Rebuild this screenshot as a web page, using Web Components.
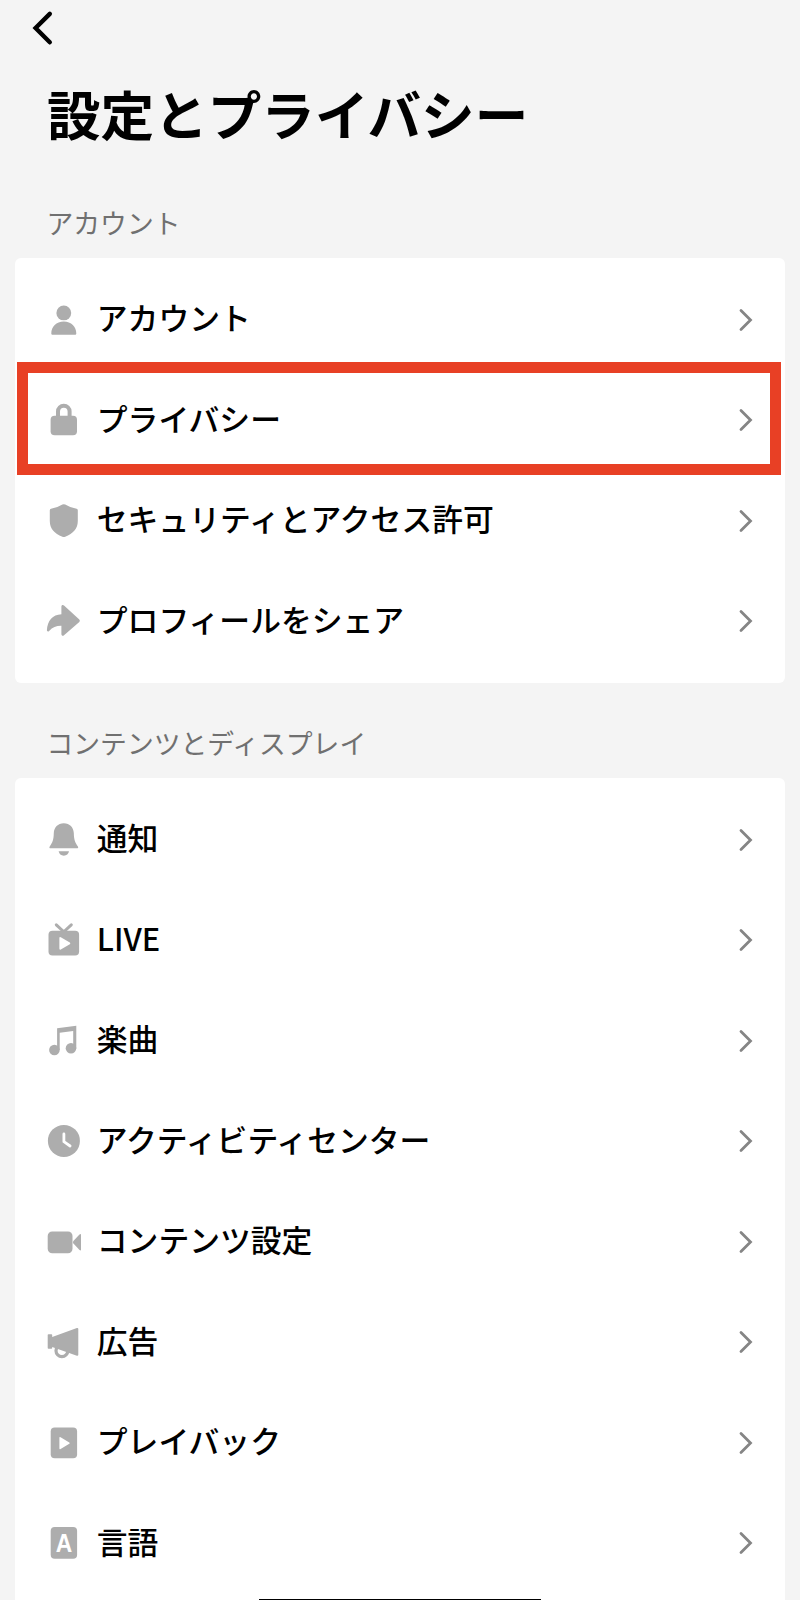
<!DOCTYPE html>
<html lang="ja">
<head>
<meta charset="utf-8">
<title>設定とプライバシー</title>
<style>
  body {
    margin: 0;
    height: 1600px;
    overflow: hidden;
    background: #f4f4f4;
    color: #000;
    font-family: "Noto Sans CJK JP", sans-serif;
  }
</style>
</head>
<body>
<settings-page heading="設定とプライバシー">
  <settings-group label="アカウント">
    <settings-row icon="person">アカウント</settings-row>
    <settings-row icon="lock" highlighted>プライバシー</settings-row>
    <settings-row icon="shield">セキュリティとアクセス許可</settings-row>
    <settings-row icon="share">プロフィールをシェア</settings-row>
  </settings-group>
  <settings-group label="コンテンツとディスプレイ">
    <settings-row icon="bell">通知</settings-row>
    <settings-row icon="live">LIVE</settings-row>
    <settings-row icon="music">楽曲</settings-row>
    <settings-row icon="clock">アクティビティセンター</settings-row>
    <settings-row icon="video">コンテンツ設定</settings-row>
    <settings-row icon="horn">広告</settings-row>
    <settings-row icon="playback">プレイバック</settings-row>
    <settings-row icon="language">言語</settings-row>
  </settings-group>
</settings-page>

<script>
const icons = {
  person: `
    <circle cx="17.8" cy="10.9" r="7.4"/>
    <path d="M5.3 31.500c0-7 5-12 12.500-12s12.500 5 12.500 12c0 .8-.6 1.300-1.400 1.300H6.700c-.8 0-1.400-.5-1.400-1.300z"/>`,
  lock: `
    <path d="M12 16V9.600a5.800 5.800 0 0 1 11.600 0V16" fill="none" stroke="currentColor" stroke-width="4"/>
    <rect x="4.600" y="13.700" width="26.400" height="19.600" rx="4"/>`,
  shield: `
    <path d="M16.4 1.6q1.4-.8 2.8 0Q24.5 5 30.6 5.7q1.2.2 1.2 1.5V18c0 7.600-4.500 12.500-12.600 15.800q-1.400.5-2.800 0C8.300 30.500 3.800 25.600 3.800 18V7.200q0-1.300 1.200-1.500Q11.100 5 16.400 1.600z"/>`,
  share: `
    <path d="M15.400 3.600c0-1.500 1.500-2 2.600-1l15.300 14q1.200 1.200 0 2.500L18 32.200c-1.100 1-2.600.4-2.600-1v-8.400c-5-.1-8.800 1.600-12.300 5.100-1 1-2.300.5-2.200-.9C1.500 17.500 6.500 11.700 15.400 11.200z"/>`,
  bell: `
    <path d="M17.800 1.300c6 0 9.800 4.300 10 9.800.2 6.900 1.200 9.400 4.100 13.300.7 1 .2 1.900-.8 1.900H4.500c-1 0-1.500-.9-.8-1.900 2.900-3.900 3.900-6.400 4.100-13.300.2-5.500 4-9.800 10-9.800z"/>
    <path d="M12.600 29.300H23c-.5 2.600-2.400 4.400-5.200 4.400s-4.700-1.800-5.200-4.400z"/>`,
  live: `
    <path d="M10.300 2.800l7.500 7 7.500-7" fill="none" stroke="currentColor" stroke-width="3" stroke-linecap="round"/>
    <rect x="2.500" y="8.800" width="30.600" height="24.600" rx="4"/>
    <path d="M13.400 16v10.600q0 1.600 1.400.8l9-5.200q1.200-.9 0-1.700l-9-5.300q-1.400-.8-1.400.8z" fill="#fff"/>`,
  music: `
    <circle cx="8.400" cy="27" r="5.300"/>
    <circle cx="25" cy="25.200" r="5.300"/>
    <path d="M11.100 5.200L30.300 2.700V25.200H27.200V8L13.700 9.800V27H11.100z"/>`,
  clock: `
    <circle cx="17.900" cy="17.900" r="16"/>
    <path d="M17.900 11V18.700l6.200 4.300" fill="none" stroke="#fff" stroke-width="2.800" stroke-linecap="round" stroke-linejoin="round"/>`,
  video: `
    <rect x="1.700" y="7.500" width="24.800" height="21.700" rx="4.500"/>
    <path d="M27.400 17.100l6.100-6.500q1.500-1.200 1.500.5v14.500q0 1.700-1.500.5l-6.100-6.500q-1-1.200 0-2.500z"/>`,
  horn: `
    <circle cx="15.900" cy="26.700" r="5.900" fill="#fff" stroke="currentColor" stroke-width="3.200"/>
    <path d="M2.500 10.300h2.900q.8 0 .8.800v1.900L30.900 4q1.400-.3 1.400 1v25.700q0 1.400-1.400 1.100L6.200 23v.9q0 .8-.8.800H2.500q-.8 0-.8-.8V11.100q0-.8.800-.8z"/>`,
  playback: `
    <rect x="4.700" y="2.400" width="26.400" height="30.800" rx="4"/>
    <path d="M13.400 12.800v10.400q0 1.400 1.200.7l8.700-5.200q1-.7 0-1.300l-8.700-5.200q-1.200-.7-1.200.6z" fill="#fff"/>`,
  language: `
    <rect x="4.700" y="1.900" width="26.400" height="31.800" rx="4"/>
    <text x="17.900" y="26.800" text-anchor="middle" fill="#fff" font-family="Liberation Sans, sans-serif" font-size="25" font-weight="700" textLength="16.500" lengthAdjust="spacingAndGlyphs">A</text>`,
};

const pageTemplate = document.createElement("template");
pageTemplate.innerHTML = `
  <style>
    :host {
      display: block;
      position: relative;
      height: 1600px;
      overflow: hidden;
    }
    header {
      box-sizing: border-box;
      height: 188px;
    }
    .back {
      display: block;
      width: 24px;
      height: 36px;
      padding: 10px 0 0 30px;
    }
    h1 {
      margin: 28px 0 0 47px;
      font-size: 53.600px;
      line-height: 78px;
      font-weight: 700;
      white-space: nowrap;
    }
    /* home indicator, only its top edge is on screen */
    .indicator {
      position: absolute;
      left: 259px;
      top: 1599px;
      width: 282px;
      height: 9px;
      background: #000;
    }
  </style>
  <header>
    <svg class="back" viewBox="0 0 24 36" fill="none" stroke="#000" stroke-width="4.400">
      <path d="M19.800 3.900L5.600 18l14.200 14.300" stroke-linecap="round"/>
    </svg>
    <h1></h1>
  </header>
  <slot></slot>
  <div class="indicator"></div>
`;

class SettingsPage extends HTMLElement {
  constructor() {
    super();
    this.attachShadow({ mode: "open" });
  }

  connectedCallback() {
    this.shadowRoot.appendChild(pageTemplate.content.cloneNode(true));
    this.shadowRoot.querySelector("h1").textContent = this.getAttribute("heading");
  }
}

const groupTemplate = document.createElement("template");
groupTemplate.innerHTML = `
  <style>
    :host {
      display: block;
      margin: 0 15px 25px;
    }
    h2 {
      margin: 0;
      padding: 16px 0 16px 31.500px;
      color: #707070;
      font-size: 26.800px;
      line-height: 38px;
      font-weight: 400;
    }
    .card {
      padding: 11.500px 0;
      border-radius: 6px;
      background: #fff;
    }
  </style>
  <h2></h2>
  <div class="card"><slot></slot></div>
`;

class SettingsGroup extends HTMLElement {
  constructor() {
    super();
    this.attachShadow({ mode: "open" });
  }

  connectedCallback() {
    this.shadowRoot.appendChild(groupTemplate.content.cloneNode(true));
    this.shadowRoot.querySelector("h2").textContent = this.getAttribute("label");
  }
}

const rowTemplate = document.createElement("template");
rowTemplate.innerHTML = `
  <style>
    :host {
      display: flex;
      align-items: center;
      position: relative;
      box-sizing: border-box;
      height: 100.500px;
      padding: 0 31px 0 31px;
      font-size: 30.800px;
      line-height: 44px;
      font-weight: 500;
    }
    .icon {
      width: 36px;
      height: 36px;
      overflow: visible;
      color: #adadad;
      fill: currentColor;
    }
    .label {
      flex: 1;
      margin: -5px 0 0 14.800px;
      white-space: nowrap;
    }
    .chevron {
      width: 16px;
      height: 24px;
    }
    .frame {
      display: none;
      position: absolute;
      inset: -8px 4px -4px 2px;
      border: 11px solid #e84025;
    }
    :host([highlighted]) .frame {
      display: block;
    }
  </style>
  <svg class="icon" viewBox="0 0 36 36"></svg>
  <span class="label"><slot></slot></span>
  <svg class="chevron" viewBox="0 0 16 24" fill="none" stroke="#858585" stroke-width="2.800">
    <path d="M3 2.500l9.500 9.500L3 21.500" stroke-linecap="round"/>
  </svg>
  <div class="frame"></div>
`;

class SettingsRow extends HTMLElement {
  constructor() {
    super();
    this.attachShadow({ mode: "open" });
  }

  connectedCallback() {
    this.shadowRoot.appendChild(rowTemplate.content.cloneNode(true));
    this.shadowRoot.querySelector(".icon").innerHTML = icons[this.getAttribute("icon")] ?? "";
  }
}

customElements.define("settings-page", SettingsPage);
customElements.define("settings-group", SettingsGroup);
customElements.define("settings-row", SettingsRow);
</script>
</body>
</html>
